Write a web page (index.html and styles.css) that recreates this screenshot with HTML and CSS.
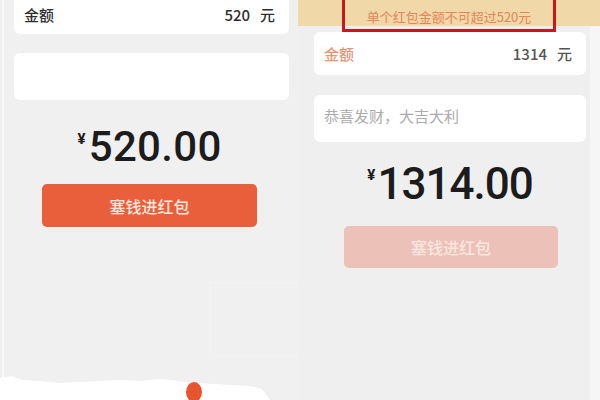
FILE: index.html
```html
<!DOCTYPE html>
<html lang="zh-CN">
<head>
<meta charset="utf-8">
<link rel="stylesheet" href="styles.css">
</head>
<body>
<div class="screen">
  <section class="panel panel-left">
    <div class="card amount-card top-card">
      <span class="label">金额</span>
      <span class="value">520<span class="unit">元</span></span>
    </div>
    <div class="card note-card"></div>
    <div class="total total-left"><span class="yen">¥</span>520.00</div>
    <button class="btn btn-active">塞钱进红包</button>
    <div class="ghost-box"></div>
    <svg class="torn" width="270" height="30" viewBox="0 0 270 30">
      <path d="M0 8 L12 6 L22 10 L40 11 L60 13 L80 12 L100 11 L120 10 L140 11 L160 9 L178 11 L196 13 L214 14 L232 15 L250 16 L262 19 L270 30 L0 30 Z" fill="#ffffff"/>
      <ellipse cx="194" cy="22" rx="8" ry="10" fill="#e8542d"/>
    </svg>
  </section>
  <section class="panel panel-right">
    <div class="banner"><span class="warn">单个红包金额不可超过520元</span></div>
    <div class="right-body">
      <div class="card amount-card error-card">
        <span class="label label-error">金额</span>
        <span class="value value-muted">1314<span class="unit">元</span></span>
      </div>
      <div class="card note-card placeholder-card">恭喜发财，大吉大利</div>
      <div class="total total-right"><span class="yen">¥</span>1314.00</div>
      <button class="btn btn-disabled">塞钱进红包</button>
    </div>
  </section>
</div>
</body>
</html>
```

FILE: styles.css
```css
* { box-sizing: border-box; }
html, body {
  margin: 0;
  padding: 0;
  width: 600px;
  height: 400px;
  overflow: hidden;
  background: #efefef;
  font-family: "Noto Sans CJK SC", "Noto Sans", sans-serif;
}
.screen {
  display: flex;
  width: 600px;
  height: 400px;
}
.panel {
  display: flex;
  flex-direction: column;
  position: relative;
  height: 400px;
}
.panel-left {
  width: 297px;
  background: #f0f0f0;
  border-left: 2px solid #fafafa;
  margin-left: 2px;
  padding: 0 9px 0 10px;
}
.card {
  background: #ffffff;
  border-radius: 6px;
}
.amount-card {
  display: flex;
  justify-content: space-between;
  align-items: center;
  padding: 0 14px 0 10px;
  font-size: 15px;
  font-weight: 500;
  color: #2e2e2e;
}
.top-card {
  height: 34px;
  border-radius: 0 0 6px 6px;
  padding-bottom: 6px;
}
.value { display: flex; align-items: center; }
.value-muted { color: #555555; }
.unit { margin-left: 10px; }
.note-card {
  height: 47px;
  margin-top: 19px;
}
.total {
  font-family: Roboto, "Liberation Sans", Arial, sans-serif;
  font-weight: 500;
  color: #1c1c1c;
  text-align: center;
  line-height: 42px;
  font-size: 42px;
}
.yen {
  font-size: 15px;
  font-weight: 700;
  vertical-align: top;
  line-height: 20px;
  margin-right: 3px;
  position: relative;
  top: 3px;
}
.total-left {
  margin-top: 26px;
  margin-left: -4px;
  letter-spacing: 0.3px;
}
.btn {
  display: block;
  border: none;
  border-radius: 5px;
  font-family: "Noto Sans CJK SC", sans-serif;
  font-size: 16px;
  font-weight: 500;
  align-self: center;
  width: 215px;
  height: 43px;
  padding: 0;
}
.btn-active {
  background: #e95f3c;
  color: #fbe7df;
  margin-top: 16px;
  margin-left: -4px;
}
.ghost-box {
  position: absolute;
  left: 206px;
  top: 282px;
  width: 108px;
  height: 74px;
  border: 1px solid #f3f3f3;
}
.torn {
  position: absolute;
  left: -4px;
  bottom: 0;
}
.panel-right {
  width: 303px;
  background: #efefef;
}
.banner {
  height: 26px;
  background: #f0d8a8;
  display: flex;
  justify-content: center;
  align-items: flex-start;
  position: relative;
  z-index: 2;
}
.warn {
  width: 214px;
  height: 36px;
  margin-top: -4px;
  border: 3px solid #c9171e;
  display: flex;
  justify-content: center;
  align-items: center;
  font-size: 13px;
  color: #e4855a;
  padding-top: 5px;
}
.right-body {
  flex: 1;
  display: flex;
  flex-direction: column;
  border-right: 10px solid #f6f6f6;
  padding: 6px 4px 0 16px;
}
.error-card {
  height: 43px;
}
.label-error { color: #e49576; }
.placeholder-card {
  margin-top: 20px;
  padding: 10px 10px;
  font-size: 15px;
  color: #ababab;
}
.total-right {
  margin-top: 20px;
  font-size: 44px;
  letter-spacing: -1px;
  line-height: 44px;
}
.btn-disabled {
  background: #ecc1b8;
  color: #f9e6e0;
  margin-top: 20px;
  width: 214px;
  height: 42px;
  margin-left: 2px;
}
```
